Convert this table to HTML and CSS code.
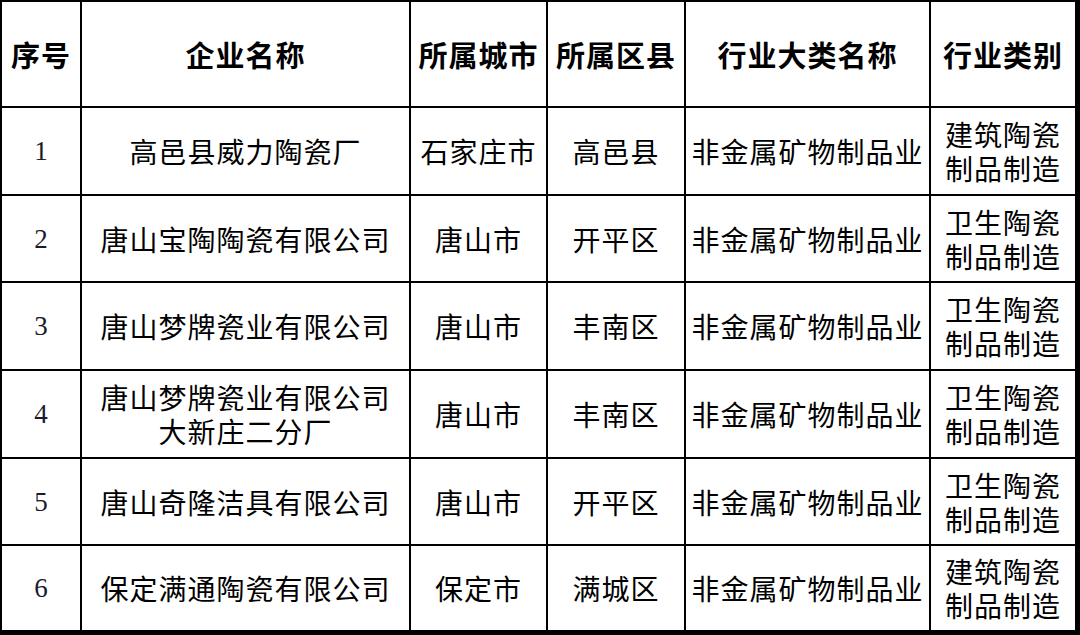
FILE: index.html
```html
<!DOCTYPE html>
<html lang="zh">
<head>
<meta charset="utf-8">
<title>企业名单</title>
<link rel="stylesheet" href="styles.css">
</head>
<body>
<table class="list">
  <colgroup>
    <col class="c-no">
    <col class="c-name">
    <col class="c-city">
    <col class="c-county">
    <col class="c-cat">
    <col class="c-type">
  </colgroup>
  <thead>
    <tr class="head">
      <th>序号</th>
      <th>企业名称</th>
      <th>所属城市</th>
      <th>所属区县</th>
      <th>行业大类名称</th>
      <th>行业类别</th>
    </tr>
  </thead>
  <tbody>
    <tr class="r1">
      <td class="num">1</td>
      <td>高邑县威力陶瓷厂</td>
      <td>石家庄市</td>
      <td>高邑县</td>
      <td>非金属矿物制品业</td>
      <td class="two">建筑陶瓷<br>制品制造</td>
    </tr>
    <tr class="r2">
      <td class="num">2</td>
      <td>唐山宝陶陶瓷有限公司</td>
      <td>唐山市</td>
      <td>开平区</td>
      <td>非金属矿物制品业</td>
      <td class="two">卫生陶瓷<br>制品制造</td>
    </tr>
    <tr class="r3">
      <td class="num">3</td>
      <td>唐山梦牌瓷业有限公司</td>
      <td>唐山市</td>
      <td>丰南区</td>
      <td>非金属矿物制品业</td>
      <td class="two">卫生陶瓷<br>制品制造</td>
    </tr>
    <tr class="r4">
      <td class="num">4</td>
      <td class="two">唐山梦牌瓷业有限公司<br>大新庄二分厂</td>
      <td>唐山市</td>
      <td>丰南区</td>
      <td>非金属矿物制品业</td>
      <td class="two">卫生陶瓷<br>制品制造</td>
    </tr>
    <tr class="r5">
      <td class="num">5</td>
      <td>唐山奇隆洁具有限公司</td>
      <td>唐山市</td>
      <td>开平区</td>
      <td>非金属矿物制品业</td>
      <td class="two">卫生陶瓷<br>制品制造</td>
    </tr>
    <tr class="r6 last">
      <td class="num">6</td>
      <td>保定满通陶瓷有限公司</td>
      <td>保定市</td>
      <td>满城区</td>
      <td>非金属矿物制品业</td>
      <td class="two">建筑陶瓷<br>制品制造</td>
    </tr>
  </tbody>
</table>
</body>
</html>
```
FILE: styles.css
```css
html, body {
  margin: 0;
  padding: 0;
  background: #fff;
}
body {
  width: 1080px;
  height: 635px;
  overflow: hidden;
  font-family: "Noto Sans CJK SC", "Liberation Sans", sans-serif;
  color: #000;
}
.list {
  width: 1080px;
  table-layout: fixed;
  border-collapse: separate;
  border-spacing: 0;
  border-left: 2px solid #000;
  border-top: 2px solid #000;
}
.c-no { width: 80px; }
.c-name { width: 329px; }
.c-city { width: 137px; }
.c-county { width: 138px; }
.c-cat { width: 245px; }
.c-type { width: 149px; }

.list th,
.list td {
  box-sizing: border-box;
  border-right: 2px solid #000;
  border-bottom: 2px solid #000;
  padding: 0;
  text-align: center;
  vertical-align: middle;
  white-space: nowrap;
  overflow: hidden;
}
.list th:last-child,
.list td:last-child {
  border-right-width: 5px;
}
.list th {
  font-size: 29px;
  font-weight: 700;
  letter-spacing: 1px;
  line-height: 34px;
}
.list td {
  font-size: 28px;
  font-weight: 400;
  letter-spacing: 1px;
  line-height: 34px;
}
.list td.num {
  font-family: "Liberation Serif", serif;
  font-size: 27px;
  letter-spacing: 0;
  color: #1a1a2a;
}
.head { height: 106px; }
.r1 { height: 88px; }
.r2 { height: 87px; }
.r3 { height: 88px; }
.r4 { height: 88px; }
.r5 { height: 87px; }
.r6 { height: 89px; }
.last td { border-bottom-width: 5px; }
```
